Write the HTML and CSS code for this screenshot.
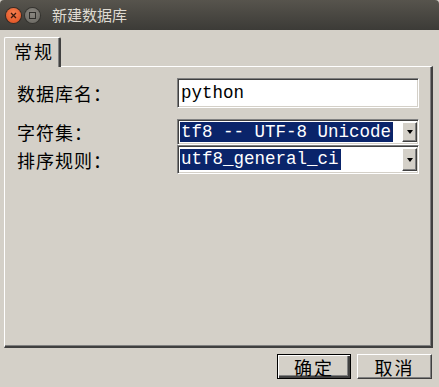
FILE: index.html
```html
<!DOCTYPE html>
<html lang="zh-CN">
<head>
    <meta charset="UTF-8">
    <meta name="viewport" content="width=device-width, initial-scale=1.0">
    <title>新建数据库</title>
    <link rel="stylesheet" href="styles.css">
</head>
<body>
    <div class="titlebar">
        <span class="btn-close">
            <svg width="7" height="7" viewBox="0 0 7 7"><path d="M1 1L6 6M6 1L1 6" stroke="#3a1a0e" stroke-width="1.3"/></svg>
        </span>
        <span class="btn-min"><span class="min-box"></span></span>
        <span class="title">新建数据库</span>
    </div>

    <div class="dialog">
        <div class="tabs">
            <div class="tab">常规</div>
        </div>
        <div class="panel">
            <div class="row name-row">
                <label class="label">数据库名：</label>
                <div class="input">python</div>
            </div>

            <div class="row charset-row">
                <label class="label">字符集：</label>
                <div class="select">
                    <div class="value"><span class="sel">tf8 -- UTF-8 Unicode</span></div>
                    <div class="arrow"><span class="tri"></span></div>
                </div>
            </div>

            <div class="row collation-row">
                <label class="label">排序规则：</label>
                <div class="select">
                    <div class="value"><span class="sel">utf8_general_ci</span></div>
                    <div class="arrow"><span class="tri"></span></div>
                </div>
            </div>
        </div>
        <div class="actions">
            <button class="button default">确定</button>
            <button class="button">取消</button>
        </div>
    </div>
</body>
</html>
```

FILE: styles.css
```css
body {
    margin: 0;
    width: 439px;
    height: 387px;
    overflow: hidden;
    background-color: #d4d0c8;
    font-family: "Noto Sans CJK SC", sans-serif;
}

.titlebar {
    height: 30px;
    display: flex;
    align-items: center;
    padding-left: 6px;
    background: linear-gradient(#57544d, #3c3b37);
    border-radius: 4px 4px 0 0;
}

.btn-close,
.btn-min {
    width: 15px;
    height: 15px;
    border-radius: 50%;
    display: flex;
    align-items: center;
    justify-content: center;
}

.btn-close {
    background: radial-gradient(circle at 50% 35%, #f58050, #df4c1c);
    box-shadow: 0 0 0 1px #3a2a22;
}

.btn-min {
    margin-left: 4px;
    background: radial-gradient(circle at 50% 35%, #8a8781, #67655f);
    box-shadow: 0 0 0 1px #34332f;
}

.min-box {
    width: 5px;
    height: 5px;
    border: 1px solid #2e2d2a;
}

.title {
    margin-left: 12px;
    color: #dfdbd2;
    font-size: 15px;
    line-height: 30px;
}

.dialog {
    padding: 7px 6px 0 4px;
}

.tabs {
    display: flex;
    height: 30px;
    margin-bottom: -1px;
    position: relative;
    z-index: 1;
}

.tab {
    width: 57px;
    height: 30px;
    box-sizing: border-box;
    border-left: 1px solid #ffffff;
    border-top: 1px solid #ffffff;
    border-right: 2px solid #404040;
    border-radius: 2px 2px 0 0;
    box-shadow: inset -1px 0 0 #808080;
    background-color: #d4d0c8;
    padding-left: 9px;
    font-size: 18px;
    line-height: 27px;
    letter-spacing: 2px;
    color: #000;
}

.panel {
    height: 282px;
    box-sizing: border-box;
    border-top: 1px solid #ffffff;
    border-left: 1px solid #ffffff;
    border-right: 2px solid #404040;
    border-bottom: 2px solid #404040;
    box-shadow: inset -1px -1px 0 #808080;
    padding: 11px 0 0 12px;
}

.row {
    display: flex;
    align-items: center;
}

.name-row {
    height: 30px;
}

.charset-row {
    margin-top: 11px;
    height: 26px;
}

.collation-row {
    height: 29px;
}

.label {
    width: 160px;
    font-size: 18px;
    line-height: 22px;
    letter-spacing: 1px;
    color: #000;
}

.input,
.select {
    width: 242px;
    height: 100%;
    box-sizing: border-box;
    border-top: 1px solid #808080;
    border-left: 1px solid #808080;
    border-bottom: 1px solid #ffffff;
    border-right: 1px solid #ffffff;
    box-shadow: inset 1px 1px 0 #404040, inset -1px -1px 0 #d4d0c8;
    background-color: #ffffff;
    font-family: "Liberation Mono", monospace;
    font-size: 17.5px;
    color: #000;
}

.input {
    line-height: 28px;
    padding-left: 3px;
}

.select {
    display: flex;
    padding: 2px 1px 2px 2px;
}

.value {
    flex: 1;
    overflow: hidden;
    white-space: nowrap;
    display: flex;
    align-items: center;
}

.sel {
    background-color: #0a246a;
    color: #ffffff;
    line-height: 21px;
    padding: 0 2px 0 1px;
}

.arrow {
    width: 15px;
    box-sizing: border-box;
    background-color: #d4d0c8;
    border-top: 1px solid #ffffff;
    border-left: 1px solid #ffffff;
    border-right: 1px solid #404040;
    border-bottom: 1px solid #404040;
    box-shadow: inset -1px -1px 0 #808080;
    display: flex;
    align-items: center;
    justify-content: center;
}

.tri {
    width: 0;
    height: 0;
    border-left: 3.5px solid transparent;
    border-right: 3.5px solid transparent;
    border-top: 4px solid #000;
}

.actions {
    display: flex;
    justify-content: flex-end;
    gap: 6px;
    margin-top: 6px;
    margin-right: 1px;
}

.button {
    width: 75px;
    height: 25px;
    box-sizing: border-box;
    padding: 0;
    background-color: #d4d0c8;
    border-top: 1px solid #ffffff;
    border-left: 1px solid #ffffff;
    border-right: 1px solid #404040;
    border-bottom: 1px solid #404040;
    box-shadow: inset -1px -1px 0 #808080;
    font-family: "Noto Sans CJK SC", sans-serif;
    font-size: 18px;
    line-height: 22px;
    letter-spacing: 2px;
    color: #000;
}

.button.default {
    width: 74px;
    border: 1px solid #000;
    box-shadow: inset 1px 1px 0 #ffffff, inset -2px -2px 0 #404040, inset -3px -3px 0 #808080;
}
```
